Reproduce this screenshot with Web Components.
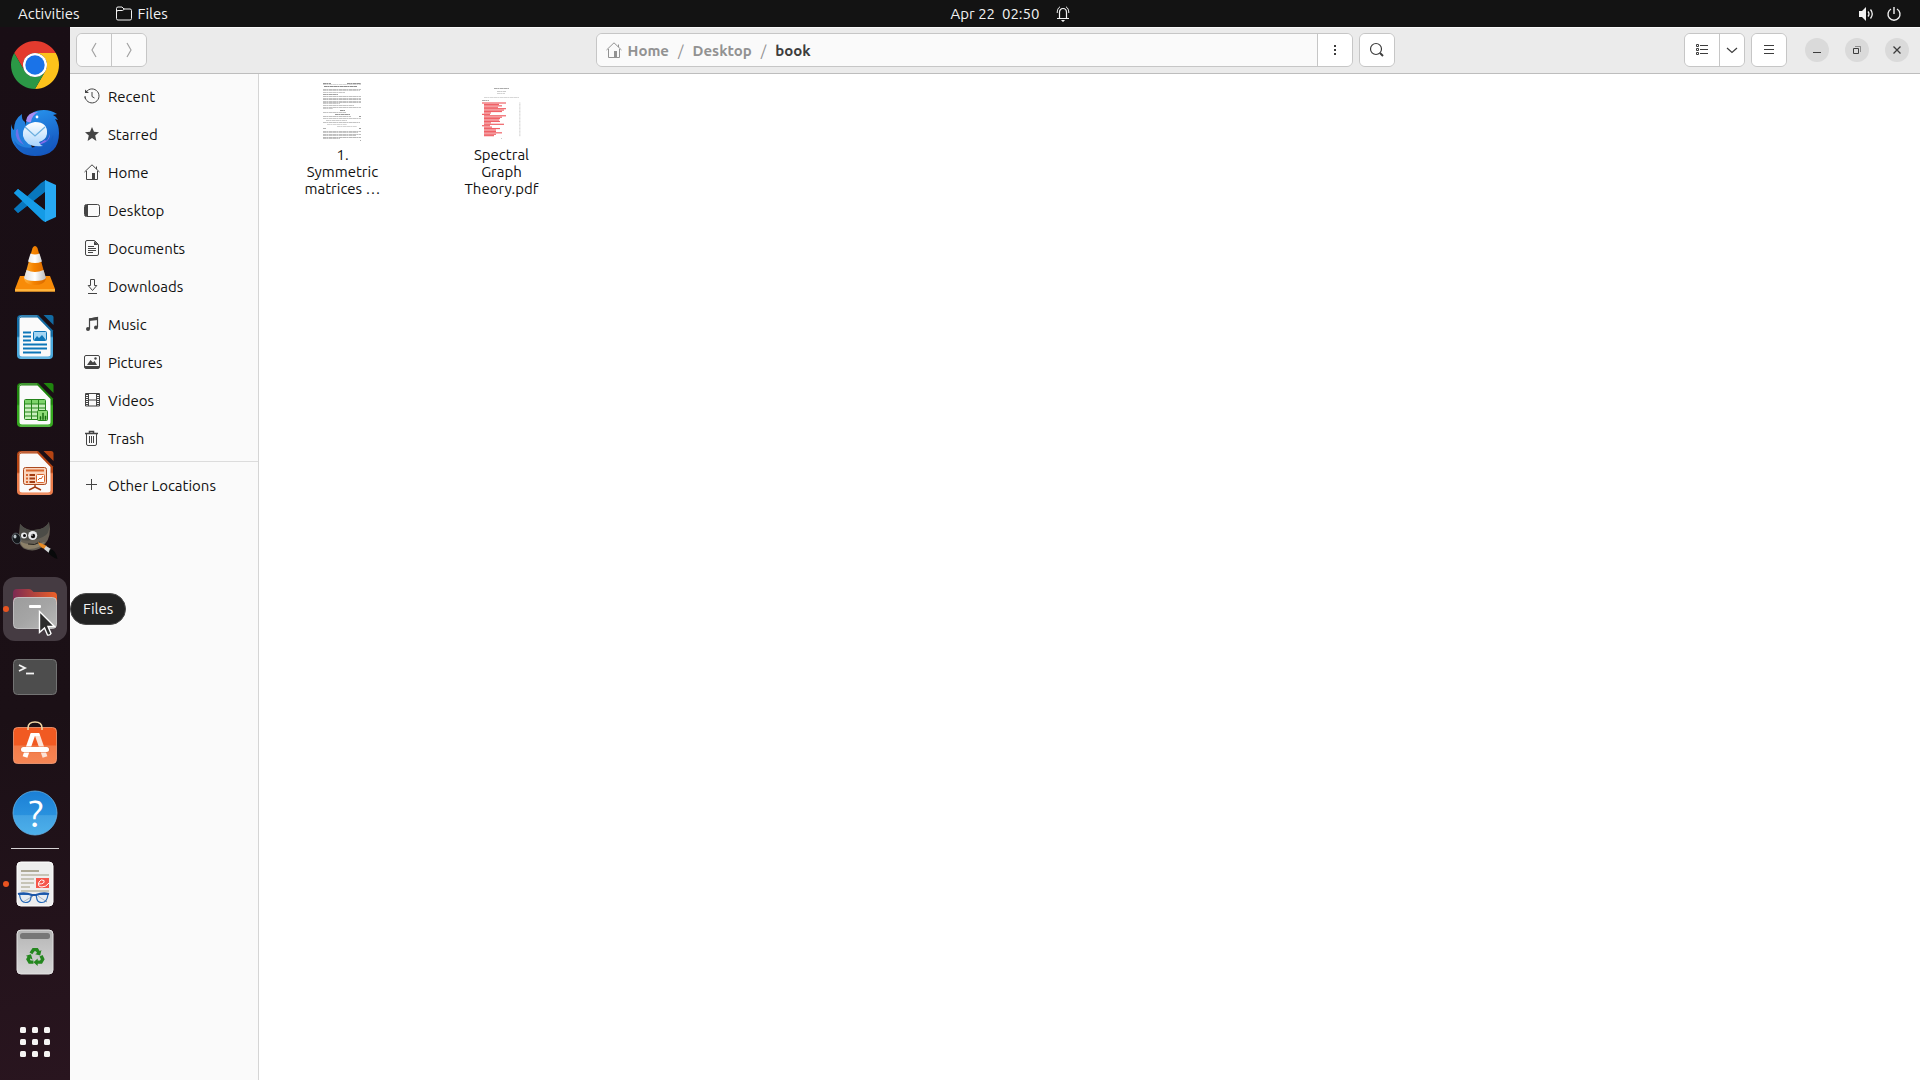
<!DOCTYPE html>
<html lang="en">
<head>
<meta charset="utf-8">
<title>Files</title>
<style>
  html, body { height: 100%; margin: 0; }
  body {
    font: 15px/17px Ubuntu, "Noto Sans", sans-serif;
    color: #111;
    overflow: hidden;
  }
</style>
</head>
<body>
<desktop-shell>
  <top-bar slot="top"></top-bar>
  <app-dock slot="dock"></app-dock>
  <files-window>
    <header-bar slot="header"></header-bar>
    <places-sidebar slot="sidebar"></places-sidebar>
    <file-grid>
      <file-tile kind="paper">1. Symmetric matrices …</file-tile>
      <file-tile kind="contents">Spectral Graph Theory.pdf</file-tile>
    </file-grid>
  </files-window>
</desktop-shell>

<script>
// Symbolic icons, 16x16, drawn in currentColor
const SYMBOLS = {
  folder: `<path d="M.5 12.5v-10Q.5 1 2 1h4l2 2h6q1.500 0 1.500 1.500v8q0 1.500-1.500 1.500H2q-1.500 0-1.500-1.500zM.5 6q0-1.500 1.500-1.500h4.500l2-1.500" fill="none" stroke="currentColor"/>`,
  notify: `<path d="M4.500 12.500V6.500C4.500 4 6 2.500 8 2.500C10 2.500 11.500 4 11.500 6.500V12.500M2 12.500H14" fill="none" stroke="currentColor" stroke-width="1.200"/><path d="M5 .8C3 2 2.200 4 2.200 7M11 .8C13 2 13.800 4 13.800 7" fill="none" stroke="currentColor"/><path d="M6 14H10L8.500 15.800H7.500Z" fill="currentColor"/>`,
  volume: `<path d="M1 5h3l4-4v14l-4-4H1z" fill="currentColor"/><path d="M10 5.500q2 2.500 0 5M12.500 3.500q3.500 4.500 0 9" fill="none" stroke="currentColor" stroke-width="1.300"/>`,
  power: `<path d="M5 3a6 6 0 1 0 6 0M8 1v7" fill="none" stroke="currentColor" stroke-width="1.400"/>`,
  back: `<path d="M10 1 6 8l4 7" fill="none" stroke="currentColor" stroke-width="1.200"/>`,
  forward: `<path d="m6 1 4 7-4 7" fill="none" stroke="currentColor" stroke-width="1.200"/>`,
  home: `<path d="M.5 8 8 .8 15.500 8M2.500 7v8.500h11V7M12.500 5V2.500" fill="none" stroke="currentColor"/><path d="M8 9h3v6H8z" fill="currentColor"/>`,
  more: `<path d="M7 3h2v2H7zM7 7h2v2H7zM7 11h2v2H7z" fill="currentColor"/>`,
  search: `<circle cx="7" cy="7" r="5.500" fill="none" stroke="currentColor" stroke-width="1.200"/><path d="m11 11 3 3" stroke="currentColor" stroke-width="2"/>`,
  list: `<path d="M2.500 2.500h2v2h-2zM2.500 6.500h2v2h-2zM2.500 10.500h2v2h-2z" fill="none" stroke="currentColor"/><path d="M6 3.500h8M6 7.500h8M6 11.500h8" stroke="currentColor"/>`,
  down: `<path d="m3 6 5 4.500L13 6" fill="none" stroke="currentColor" stroke-width="1.200"/>`,
  menu: `<path d="M3 3.500h10M3 7.500h10M3 11.500h10" stroke="currentColor"/>`,
  minimize: `<path d="M4 10.500h8" stroke="currentColor"/>`,
  restore: `<path d="M4.500 6.500h5v5h-5z" fill="none" stroke="currentColor"/><path d="M6 4.500h5.500V10" fill="none" stroke="currentColor" opacity=".5"/>`,
  close: `<path d="m4.500 4.500 7 7M11.500 4.500l-7 7" stroke="currentColor" stroke-width="1.300"/>`,
  recent: `<path d="M2.200 4A7 7 0 1 1 1 8M8 4v4.500l2.500 1.500" fill="none" stroke="currentColor"/><path d="M1 1.500 5 5H1z" fill="currentColor"/><path d="M1 9q0 1 .5 2" stroke="currentColor" fill="none"/>`,
  star: `<path d="m8 1 2 4.800 5 .4-3.800 3.400L12.400 15 8 12l-4.400 3 1.200-5.400L1 6.200l5-.4z" fill="currentColor"/>`,
  desktop: `<rect x=".5" y="2.500" width="15" height="12" rx="2" fill="none" stroke="currentColor"/><path d="M1 3h3v11H1z" fill="currentColor"/>`,
  document: `<path d="M3 .5h7.500l4 4V14q0 1.500-1.500 1.500H3q-1.500 0-1.500-1.500V2Q1.500.5 3 .5z" fill="none" stroke="currentColor"/><path d="M10 1v4h4.500z" fill="currentColor"/><path d="M4 6.500h6M4 8.500h8M4 10.500h8M4 12.500h5" stroke="currentColor"/>`,
  download: `<path d="M6.500 1.500h4v6h2.300l-4.300 5-4.300-5h2.300zM4 15.500h9" fill="none" stroke="currentColor"/>`,
  music: `<path d="M5.500 13V3l8-1.500V11" fill="none" stroke="currentColor" stroke-width="1.200"/><path d="M5 2.500 14 1v3L5 5z" fill="currentColor"/><circle cx="4" cy="13" r="2" fill="currentColor"/><circle cx="12" cy="11.500" r="2" fill="currentColor"/>`,
  picture: `<rect x=".5" y="1.500" width="15" height="13" rx="1.500" fill="none" stroke="currentColor"/><path d="M1 12h14v2H1zM3 11l3.500-5 2.500 2.500 1.500-1.500L13 11z" fill="currentColor"/><circle cx="11.500" cy="4.500" r="1.200" fill="currentColor"/>`,
  video: `<path d="M1.500 1.500h14v12.500h-14zM4.500 1.500V14M12.500 1.500V14M4.500 8h8" fill="none" stroke="currentColor"/><path d="M3 2v12M14 2v12" stroke="currentColor" stroke-width="2" stroke-dasharray="1 1"/>`,
  trash: `<path d="M1 3.500h13M5.500 3V1.500h4V3" fill="none" stroke="currentColor" stroke-width="1.500"/><path d="M2.500 4v10q0 1.500 1.500 1.500h7q1.500 0 1.500-1.500V4M5.500 6v7M7.500 6v7M9.500 6v7" fill="none" stroke="currentColor"/>`,
  plus: `<path d="M7.500 2v11M2 7.500h11" stroke="currentColor"/>`
};

// The three office apps share a page with a folded corner
const officePage = (edge, dark, art) => `
  <defs><linearGradient id="p" x2="0" y2="1"><stop offset=".48" stop-color="${dark}"/><stop offset=".52" stop-color="${edge}"/></linearGradient></defs>
  <path d="M10 2h17l15 15.500V42q0 4-4 4H10q-4 0-4-4V6q0-4 4-4z" fill="url(#p)"/>
  <path d="M10 4.500h16.500L39.500 18v23q0 2.500-2.500 2.500H11q-2.500 0-2.500-2.500V7q0-2.500 1.500-2.500z" fill="#fafafa"/>
  <path d="M32.500 2H40q2.500 0 2.500 2.500V12z" fill="${dark}"/>
  <path d="M8 6q0-3 3-3h15M9 45h30" fill="none" stroke="#fff" opacity=".3"/>${art}`;

// Launcher icons, 48x48
const APPS = {
  chrome: `
    <path d="M24 12h20.780A24 24 0 0 0 3.220 12l10.390 18A12 12 0 0 1 24 12z" fill="#e33b2e"/>
    <path d="M44.780 12A24 24 0 0 1 24 48l10.390-18A12 12 0 0 0 24 12z" fill="#fcc21b"/>
    <path d="M24 48A24 24 0 0 1 3.220 12l10.390 18a12 12 0 0 0 20.780 0z" fill="#2b9846"/>
    <circle cx="24" cy="24" r="12" fill="#fff"/><circle cx="24" cy="24" r="9.700" fill="#1a73e8"/>`,
  mail: `
    <defs>
      <linearGradient id="b" x2=".4" y2="1"><stop stop-color="#2a9df4"/><stop offset="1" stop-color="#1557c0"/></linearGradient>
      <linearGradient id="e" x2="0" y2="1"><stop stop-color="#fff"/><stop offset="1" stop-color="#a9d4fb"/></linearGradient>
    </defs>
    <path d="M0 15q1 5 3 6 0-11 8-16-1 5 3 8l8 30-8 1Q0 38 0 25z" fill="#2380dd"/>
    <path d="M15 14Q18 1 33 1q7 0 13 4l-4 1q3 1 5 5l-3-1q4 6 4 14 0 23-24 23Q7 47 2 32q10 9 22 6Q14 30 15 14z" fill="url(#b)"/>
    <path d="M3 31q7 10 20 9 14-1 19-14Q44 45 24 46 8 45 3 31z" fill="#1560c2" opacity=".65"/>
    <path d="M15 12q1-9 12-9-6 3-7 10-2 1-5-1z" fill="#a78cf2"/>
    <path d="M5 21q-2 10 8 15Q7 29 7 20z" fill="#6c72e9"/>
    <path d="M34 31q2 3 5-6 0 9-13 11z" fill="#806ce8"/>
    <path d="M24 13q13 0 12 12-1 6-8 8 1 3 4 4-17 2-20-10Q11 15 24 13z" fill="url(#e)"/>
    <path d="m14 18 10 9 10-9" fill="none" stroke="#6cafdf" stroke-width="1.300"/>
    <circle cx="26" cy="8" r="1.400" fill="#fff"/>`,
  code: `
    <path d="m3 32 4 4 28-22V3z" fill="#0669ad"/>
    <path d="m3 32 4 4 28-22V3l-5 3z" fill="#0877bd"/>
    <path d="m3 16 4-4 28 22v11l-4-3z" fill="#0992dc"/>
    <path d="m3 16 4-4 28 22v11q-2 0-4-2z" fill="#159be6"/>
    <path d="m34 3 11 5v32l-11 5z" fill="#27a9f3"/>`,
  cone: `
    <defs><linearGradient id="c"><stop stop-color="#ffb13b"/><stop offset=".45" stop-color="#f58300"/><stop offset="1" stop-color="#d96900"/></linearGradient>
    <linearGradient id="w"><stop stop-color="#ddd"/><stop offset=".5" stop-color="#fff"/><stop offset="1" stop-color="#bbb"/></linearGradient></defs>
    <path d="M9 31h30l5 13v2.500H4V44z" fill="#f88b08"/><path d="M4 44h40v2.500H4z" fill="#ffb43c"/>
    <path d="M13 34 21.500 3q2.500-4 5 0L35 34q-2 6-11 6t-11-6z" fill="url(#c)"/>
    <path d="M19.500 8.500q4.500 2 9 0l2.500 8q-7 3-14 0zM15.500 25q8.500 4 17 0l2.500 8q-2 3-11 3t-11-3z" fill="url(#w)"/>`,
  writer: officePage('#4aa8dc', '#126ba3', `
    <path d="M12 19.500h8M12 23.500h8M12 27.500h8M12 31.500h24M12 35.500h24M12 39.500h18" stroke="#0d76b8" stroke-width="2"/>
    <rect x="22.500" y="18.500" width="13" height="9" rx="1" fill="#a3d5f3" stroke="#0d76b8"/><path d="m23 27 3-4 2 2 3-3 4 5z" fill="#0d76b8"/>`),
  calc: officePage('#35a81f', '#1f850e', `
    <rect x="13.500" y="18.500" width="21" height="20" rx="1" fill="#c9efbd" stroke="#24831a"/>
    <path d="M14 19h20v4H14z" fill="#7dd36a"/>
    <path d="M14 23h21M14 27h21M14 31h21M14 35h21M20.500 19v19M27.500 19v19" stroke="#24831a"/>
    <rect x="26.500" y="29.500" width="10" height="10" rx="1" fill="#8fdc77" stroke="#24831a"/><path d="M29 38.500v-3h1v3zM31.500 38.500V32h1v6.500zM34 38.500V35h1v3.500z" fill="#186e10" stroke="#186e10" stroke-width=".5"/>`),
  impress: officePage('#ea7c4b', '#b44413', `
    <rect x="12.500" y="18.500" width="23" height="17" rx="2" fill="#fad5bd" stroke="#ab4a20"/>
    <path d="M15 21.500h18" stroke="#d8662e" stroke-width="2"/>
    <path d="M15 26h2M15 29.500h2M15 33h2" stroke="#d8662e" stroke-width="2"/><path d="M18.500 26H24M18.500 29.500H24M18.500 33H24" stroke="#a23b12" stroke-width="2"/>
    <rect x="25.500" y="25.500" width="8" height="8" rx="1" fill="#fff" stroke="#d8662e"/><path d="m27 31 2-2 1 1 2-3" fill="none" stroke="#d8662e"/><path d="M24 36v2l-6 3M24 38l6 3" fill="none" stroke="#a23b12" stroke-width="1.400"/>`),
  gimp: `
    <path d="M9 7q6 7 14 6 12-1 15-8 3 14-4 22-6 8-17 6Q7 31 8 19z" fill="#655f55"/>
    <path d="M9 7q6 7 14 6 12-1 15-8 1 10-3 13-9 7-26 5z" fill="#4c4c47"/>
    <path d="M9 24q9 6 25 1-5 7-16 7-8-1-9-8z" fill="#8c8069"/>
    <circle cx="13" cy="18.500" r="3" fill="#e7e9ea"/><circle cx="21.700" cy="18.500" r="4.500" fill="#e7e9ea"/>
    <circle cx="13.500" cy="18.500" r="1.500" fill="#111"/><circle cx="22" cy="19" r="2.200" fill="#111"/><circle cx="21" cy="18" r=".8" fill="#fff"/>
    <ellipse cx="5.500" cy="21.500" rx="4.200" ry="5.500" fill="#15181c" stroke="#7b858d" stroke-width=".6" transform="rotate(-22 5.500 21.500)"/><ellipse cx="4" cy="19.500" rx="1.500" ry="2" fill="#b9c1c7"/>
    <path d="M17 27q7 2 12-2" fill="none" stroke="#25231f"/>
    <path d="m27 25 9 4-2 3q-5-1-7-7z" fill="#e98b25"/><path d="m35 29 5 3-2 4-5-4z" fill="#d3d7d8"/><path d="M39 32q6 1 7.500 10-6-2-9-6z" fill="#08090a"/>`,
  files: `
    <defs><linearGradient id="t"><stop stop-color="#7c2a52"/><stop offset="1" stop-color="#ee6128"/></linearGradient>
    <linearGradient id="f" x2="1" y2="1"><stop stop-color="#9c9c9c"/><stop offset=".5" stop-color="#a5a5a5"/><stop offset="1" stop-color="#b9b9b9"/></linearGradient></defs>
    <path d="M2 20V8q0-4 4-4h12q2 0 3 1.500L22.500 7H42q4 0 4 4v9z" fill="url(#t)"/>
    <rect x="2.500" y="12.500" width="43" height="31" rx="4" fill="url(#f)" stroke="#d1d1d1" stroke-width=".8"/>
    <rect x="18" y="20" width="12" height="3" rx="1" fill="#fff"/>`,
  terminal: `
    <rect x="2.500" y="6.500" width="43" height="35" rx="4" fill="#4d4d4d" stroke="#737373"/>
    <path d="m8 12 6 3-6 3" fill="none" stroke="#f4f4f4" stroke-width="1.800"/><path d="M15 20.500h8" stroke="#f4f4f4" stroke-width="1.800"/>`,
  software: `
    <defs><linearGradient id="s" x2="0" y2="1"><stop offset=".49" stop-color="#f15a22"/><stop offset=".51" stop-color="#f37b49"/><stop offset="1" stop-color="#f58655"/></linearGradient></defs>
    <rect x="2.500" y="6.500" width="43" height="36" rx="4" fill="url(#s)" stroke="#f9a078" stroke-width=".8"/>
    <path d="M17 9V7q0-6 7-6t7 6v2" fill="none" stroke="#f2d7a6" stroke-width="1.500"/>
    <path d="m14 36 8-23" fill="none" stroke="#fff" stroke-width="5"/><path d="m34 36-8-23" fill="none" stroke="#fbe3d8" stroke-width="5"/><path d="M20 12h8l1 3H19z" fill="#fff"/>
    <path d="M12 28.500h24" stroke="#e5713f" stroke-width="6" stroke-linecap="round"/><path d="M12.500 28.500h23" stroke="#fff" stroke-width="5" stroke-linecap="round"/>`,
  help: `
    <defs><linearGradient id="h" x2="0" y2="1"><stop stop-color="#1b7fd5"/><stop offset=".54" stop-color="#2991de"/><stop offset=".56" stop-color="#42a2e3"/><stop offset="1" stop-color="#4db0ea"/></linearGradient></defs>
    <circle cx="24" cy="24" r="22" fill="url(#h)" stroke="#63b4ea" stroke-width=".8"/>
    <text x="25" y="38" text-anchor="middle" font-family="Ubuntu, 'Noto Sans', sans-serif" font-size="38" fill="#fff">?</text>`,
  evince: `
    <rect x="6" y="2" width="36" height="44" rx="4" fill="#eee" stroke="#fff" stroke-width="1"/>
    <path d="M10 11h18" stroke="#ada995" stroke-width="2"/><path d="M10 15h28M10 19h13M10 23h13M10 27h9M10 31h28" stroke="#c6c4b6" stroke-width="2"/>
    <path d="M25 18h13v10H25z" fill="#f5564b"/><path d="M28 24q6 0 5-3.500-3-2-5 1.500-2 5 3 5 4 0 7-4" fill="none" stroke="#fff"/>
    <path d="m12 42 10-6M27 36l9 6" stroke="#8d9196"/>
    <path d="M8.500 34.500h12l-1 5q-1 3-5 3-5 0-6-8zM25 34.500h12q-1 8-6 8-4 0-5-3z" fill="#dce9f4" fill-opacity=".4" stroke="#2468b8" stroke-width="1.200"/>
    <path d="M7 34q7-2 14 1h4q7-3 13-1" fill="none" stroke="#1d57a8" stroke-width="2"/>`,
  bin: `
    <defs><linearGradient id="g" x2="0" y2="1"><stop stop-color="#b5b5b5"/><stop offset="1" stop-color="#d6d6d6"/></linearGradient></defs>
    <rect x="6" y="2" width="36" height="44" rx="4" fill="url(#g)" stroke="#e3e3e3" stroke-width="1"/><rect x="9" y="5" width="30" height="6" rx="2.500" fill="#777"/>
    <g transform="translate(4 3.500) scale(.84)">
      <path d="m19 26 3-4.500h4l2.500 4M31 29l2 4-2 3.500h-5M22 36.500h-4.500l-2-3.500 2-3.500" fill="none" stroke="#24871e" stroke-width="4"/>
      <path d="m31.500 22-1.500 6.500-6-1.500zM27 32v9l-5-4.500zM13 29l6-2 2 6.500z" fill="#24871e"/>
    </g>`,
  grid: `<g fill="#f6f5f4">${[9, 21, 33].map(y => [9, 21, 33].map(x => `<rect x="${x}" y="${y}" width="6" height="6" rx="1.500"/>`).join('')).join('')}</g>`
};

class UiIcon extends HTMLElement {
  connectedCallback() {
    this.attachShadow({ mode: "open" });
    const name = this.getAttribute("name");
    const app = this.hasAttribute("app");
    const size = app ? 48 : 16;
    this.shadowRoot.innerHTML = `
      <style>
        :host { display: block; flex: none; width: ${size}px; height: ${size}px; }
        svg { display: block; width: 100%; height: 100%; }
      </style>
      <svg viewBox="0 0 ${size} ${size}" aria-hidden="true">${app ? APPS[name] : SYMBOLS[name]}</svg>`;
  }
}

class DesktopShell extends HTMLElement {
  constructor() {
    super();
    this.attachShadow({ mode: "open" }).innerHTML = `
      <style>
        :host {
          display: grid;
          grid-template: auto minmax(0, 1fr) / auto minmax(0, 1fr);
          height: 100vh;
          background: #fff;
        }
        .top { grid-column: 1 / -1; }
        .dock { position: relative; z-index: 1; display: grid; }
        .work { display: grid; min-width: 0; min-height: 0; }
      </style>
      <div class="top"><slot name="top"></slot></div>
      <div class="dock"><slot name="dock"></slot></div>
      <div class="work"><slot></slot></div>`;
  }
}

class TopBar extends HTMLElement {
  constructor() {
    super();
    this.attachShadow({ mode: "open" }).innerHTML = `
      <style>
        :host {
          display: grid;
          grid-template-columns: 70px 1fr auto 1fr;
          align-items: center;
          height: 27px;
          background: #131313;
          color: #f2f2f2;
        }
        button {
          display: flex;
          align-items: center;
          gap: 6px;
          padding: 0;
          border: 0;
          background: none;
          color: inherit;
          font: inherit;
        }
        .left { grid-column: 1 / 3; display: flex; gap: 36px; padding-left: 18px; }
        .clock { gap: 16px; padding-left: 32px; }
        time { white-space: pre; }
        .status { justify-self: end; gap: 12px; padding-right: 18px; }
      </style>
      <div class="left">
        <button>Activities</button>
        <button><ui-icon name="folder"></ui-icon>Files</button>
      </div>
      <button class="clock"><time>Apr 22  02:50</time><ui-icon name="notify"></ui-icon></button>
      <button class="status" aria-label="System"><ui-icon name="volume"></ui-icon><ui-icon name="power"></ui-icon></button>`;
  }
}

class DockItem extends HTMLElement {
  connectedCallback() {
    this.attachShadow({ mode: "open" });
    const hovered = this.hasAttribute("hovered");
    this.shadowRoot.innerHTML = `
      <style>
        :host { display: block; position: relative; padding: 2px 3px; }
        button {
          display: grid;
          place-items: center;
          width: 64px;
          height: 64px;
          padding: 0;
          border: 0;
          border-radius: 12px;
          background: none;
        }
        :host([hovered]) button { background: #453b42; }
        :host([running])::before {
          content: "";
          position: absolute;
          left: 3px;
          top: 31px;
          width: 6px;
          height: 6px;
          border-radius: 50%;
          background: #e95420;
        }
        .tip {
          position: absolute;
          left: 70px;
          top: 18px;
          padding: 6px 12px;
          border: 1px solid #484848;
          border-radius: 16px;
          background: #222;
          color: #f4f4f4;
          line-height: 18px;
        }
        .pointer { position: absolute; left: 38px; top: 35px; width: 18px; height: 27px; }
      </style>
      <button aria-label="${this.getAttribute("label")}"><ui-icon app name="${this.getAttribute("icon")}"></ui-icon></button>
      ${hovered ? `
        <span class="tip" role="tooltip">${this.getAttribute("label")}</span>
        <svg class="pointer" viewBox="0 0 18 27" aria-hidden="true">
          <path d="M1.500 1.500v21l5-4.500 3 7q2.500.5 3.500-1.500l-3-7h6.500z" fill="#2d2d2d" stroke="#fff" stroke-width="1.400"/>
        </svg>` : ''}`;
  }
}

class AppDock extends HTMLElement {
  constructor() {
    super();
    this.attachShadow({ mode: "open" }).innerHTML = `
      <style>
        :host {
          display: flex;
          flex-direction: column;
          padding: 4px 0;
          background: linear-gradient(170deg, #190e15 0%, #1b1016 65%, #29151f 100%);
        }
        hr { width: 48px; height: 1px; margin: 1px auto; border: 0; background: #d5d2d4; }
        .spacer { flex: 1; }
      </style>
      <dock-item icon="chrome" label="Google Chrome"></dock-item>
      <dock-item icon="mail" label="Thunderbird Mail"></dock-item>
      <dock-item icon="code" label="Visual Studio Code"></dock-item>
      <dock-item icon="cone" label="VLC media player"></dock-item>
      <dock-item icon="writer" label="LibreOffice Writer"></dock-item>
      <dock-item icon="calc" label="LibreOffice Calc"></dock-item>
      <dock-item icon="impress" label="LibreOffice Impress"></dock-item>
      <dock-item icon="gimp" label="GNU Image Manipulation Program"></dock-item>
      <dock-item icon="files" label="Files" running hovered></dock-item>
      <dock-item icon="terminal" label="Terminal"></dock-item>
      <dock-item icon="software" label="Ubuntu Software"></dock-item>
      <dock-item icon="help" label="Help"></dock-item>
      <hr>
      <dock-item icon="evince" label="Document Viewer" running></dock-item>
      <dock-item icon="bin" label="Trash"></dock-item>
      <div class="spacer"></div>
      <dock-item icon="grid" label="Show Applications"></dock-item>`;
  }
}

class FilesWindow extends HTMLElement {
  constructor() {
    super();
    this.attachShadow({ mode: "open" }).innerHTML = `
      <style>
        :host {
          display: grid;
          grid-template: auto minmax(0, 1fr) / auto minmax(0, 1fr);
          background: #fff;
        }
        .header { grid-column: 1 / -1; }
        .side { display: grid; }
      </style>
      <div class="header"><slot name="header"></slot></div>
      <div class="side"><slot name="sidebar"></slot></div>
      <main><slot></slot></main>`;
  }
}

class HeaderBar extends HTMLElement {
  constructor() {
    super();
    this.attachShadow({ mode: "open" }).innerHTML = `
      <style>
        :host {
          display: grid;
          grid-template-columns: 1fr minmax(0, 799px) 1fr;
          align-items: center;
          box-sizing: border-box;
          height: 47px;
          padding: 0 6px 1px;
          border-top: 1px solid #fafafa;
          border-bottom: 1px solid #bdbdbd;
          background: #ebebeb;
          color: #3d3d3d;
        }
        button {
          display: grid;
          place-items: center;
          width: 34px;
          padding: 0;
          border: 0;
          background: #fff;
          color: inherit;
        }
        .group {
          display: flex;
          height: 32px;
          border: 1px solid #c6c6c6;
          border-radius: 6px;
          overflow: hidden;
        }
        .group > * + * { border-left: 1px solid #c6c6c6; }
        .group > button + button, path-bar + button { width: 35px; }
        .nav { justify-self: start; }
        .nav button { background: #fafafa; color: #a3a3a3; }
        .middle, .right { display: flex; align-items: center; gap: 6px; }
        .location { flex: 1; min-width: 0; }
        path-bar { flex: 1; }
        .right { justify-self: end; }
        .view button.arrow { width: 25px; }
        .controls { display: flex; gap: 16px; padding: 0 5px 0 12px; }
        .controls button { width: 24px; height: 24px; border-radius: 50%; background: #dadada; }
      </style>
      <div class="group nav">
        <button aria-label="Back" disabled><ui-icon name="back"></ui-icon></button>
        <button aria-label="Forward" disabled><ui-icon name="forward"></ui-icon></button>
      </div>
      <div class="middle">
        <div class="group location">
          <path-bar></path-bar>
          <button aria-label="Folder menu"><ui-icon name="more"></ui-icon></button>
        </div>
        <div class="group"><button aria-label="Search"><ui-icon name="search"></ui-icon></button></div>
      </div>
      <div class="right">
        <div class="group view">
          <button aria-label="List view"><ui-icon name="list"></ui-icon></button>
          <button class="arrow" aria-label="View options"><ui-icon name="down"></ui-icon></button>
        </div>
        <div class="group"><button aria-label="Main menu"><ui-icon name="menu"></ui-icon></button></div>
        <div class="controls">
          <button aria-label="Minimize"><ui-icon name="minimize"></ui-icon></button>
          <button aria-label="Restore"><ui-icon name="restore"></ui-icon></button>
          <button aria-label="Close"><ui-icon name="close"></ui-icon></button>
        </div>
      </div>`;
  }
}

class PathBar extends HTMLElement {
  constructor() {
    super();
    this.attachShadow({ mode: "open" }).innerHTML = `
      <style>
        :host {
          display: flex;
          align-items: center;
          gap: 9px;
          padding-left: 9px;
          background: #fafafa;
          color: #929292;
        }
        a {
          display: flex;
          align-items: center;
          gap: 6px;
          color: inherit;
          font-weight: 700;
          text-decoration: none;
        }
        a:last-child { color: #3d3d3d; }
      </style>
      <a href="#home"><ui-icon name="home"></ui-icon>Home</a><span>/</span>
      <a href="#desktop">Desktop</a><span>/</span>
      <a href="#book">book</a>`;
  }
}

class PlaceItem extends HTMLElement {
  connectedCallback() {
    this.attachShadow({ mode: "open" }).innerHTML = `
      <style>
        :host { display: block; }
        a {
          display: flex;
          align-items: center;
          gap: 8px;
          height: 38px;
          padding: 0 14px;
          color: #111;
          text-decoration: none;
        }
        ui-icon { color: #444; }
      </style>
      <a href="#${this.getAttribute("icon")}"><ui-icon name="${this.getAttribute("icon")}"></ui-icon><slot></slot></a>`;
  }
}

class PlacesSidebar extends HTMLElement {
  constructor() {
    super();
    this.attachShadow({ mode: "open" }).innerHTML = `
      <style>
        :host {
          display: block;
          width: 188px;
          padding-top: 3px;
          border-right: 1px solid #d5d5d5;
          background: #fafafa;
        }
        hr { height: 1px; margin: 4px 0; border: 0; background: #dcdcdc; }
      </style>
      <nav>
        <place-item icon="recent">Recent</place-item>
        <place-item icon="star">Starred</place-item>
        <place-item icon="home">Home</place-item>
        <place-item icon="desktop">Desktop</place-item>
        <place-item icon="document">Documents</place-item>
        <place-item icon="download">Downloads</place-item>
        <place-item icon="music">Music</place-item>
        <place-item icon="picture">Pictures</place-item>
        <place-item icon="video">Videos</place-item>
        <place-item icon="trash">Trash</place-item>
        <hr>
        <place-item icon="plus">Other Locations</place-item>
      </nav>`;
  }
}

class FileGrid extends HTMLElement {
  constructor() {
    super();
    this.attachShadow({ mode: "open" }).innerHTML = `
      <style>
        :host {
          display: grid;
          grid-template-columns: repeat(auto-fill, 159px);
          padding: 3px 4px;
        }
      </style>
      <slot></slot>`;
  }
}

// Rows of a page thumbnail: [y, x1, x2, grey level]
const PAPER = [
  [1, 0, 8, 120], [1, 24, 38, 120], [2, 0, 38, 200], [4, 1, 34, 110],
  [7, 0, 38, 175], [8, 0, 37, 190], [10, 0, 22, 185], [12, 0, 15, 140],
  [14, 0, 38, 175], [16, 0, 38, 180], [17, 0, 38, 170], [19, 0, 38, 180], [20, 0, 38, 175], [21, 0, 17, 190],
  [23, 0, 31, 180], [25, 0, 38, 180], [26, 0, 10, 190], [28, 17, 22, 120], [30, 0, 23, 180], [32, 12, 27, 130],
  [34, 0, 28, 175], [34, 36, 38, 130], [36, 0, 38, 185], [38, 3, 24, 190], [40, 0, 37, 180],
  [42, 4, 24, 200], [44, 14, 34, 200], [46, 0, 3, 160], [46, 36, 38, 130],
  [49, 0, 38, 175], [50, 0, 35, 185], [52, 0, 38, 175], [53, 0, 33, 180], [55, 0, 38, 165], [56, 0, 17, 180], [58, 37, 38, 150]
];
const CONTENTS_WIDTHS = [24, 17, 20, 16, 24, 22, 20, 9, 8, 24, 20, 18, 17, 18, 9, 22, 8, 10, 18, 14, 14, 20, 14, 12];

const drawRow = ([y, x1, x2, grey]) =>
  `<path d="M${x1} ${y - 0.5}H${x2}" stroke="rgb(${grey},${grey},${grey})" stroke-width=".8" stroke-dasharray="3 .3 2 .4 4 .3"/>`;

const THUMBNAILS = {
  paper: () => PAPER.map(drawRow).join(''),
  contents: () => {
    const head = [[6, 12, 27, 150], [9, 15, 24, 190], [11, 15, 23, 200], [15, 2, 37, 205], [18, 0, 7, 150], [56, 19, 20, 190]];
    const rows = CONTENTS_WIDTHS.map((x, i) => {
      const y = 20 + i * 1.42;
      const start = i % 8 === 0 ? 0 : 2;
      return `<path d="M${start} ${y}H${x}" stroke="#ef6267" stroke-width="1.200"/>` +
        `<path d="M37 ${y}h1.500" stroke="#ccc" stroke-width=".7"/>`;
    });
    return head.map(drawRow).join('') + rows.join('');
  }
};

class FileTile extends HTMLElement {
  connectedCallback() {
    this.attachShadow({ mode: "open" }).innerHTML = `
      <style>
        :host { display: block; }
        button {
          display: flex;
          flex-direction: column;
          align-items: center;
          gap: 5px;
          width: 100%;
          padding: 0;
          border: 0;
          background: none;
          color: inherit;
          font: inherit;
        }
        svg { width: 39px; height: 58px; padding-top: 6px; }
        .name { width: 80px; }
      </style>
      <button>
        <svg viewBox="0 0 39 58" aria-hidden="true">${THUMBNAILS[this.getAttribute("kind")]()}</svg>
        <span class="name"><slot></slot></span>
      </button>`;
  }
}

customElements.define("ui-icon", UiIcon);
customElements.define("desktop-shell", DesktopShell);
customElements.define("top-bar", TopBar);
customElements.define("dock-item", DockItem);
customElements.define("app-dock", AppDock);
customElements.define("files-window", FilesWindow);
customElements.define("header-bar", HeaderBar);
customElements.define("path-bar", PathBar);
customElements.define("place-item", PlaceItem);
customElements.define("places-sidebar", PlacesSidebar);
customElements.define("file-grid", FileGrid);
customElements.define("file-tile", FileTile);
</script>
</body>
</html>
